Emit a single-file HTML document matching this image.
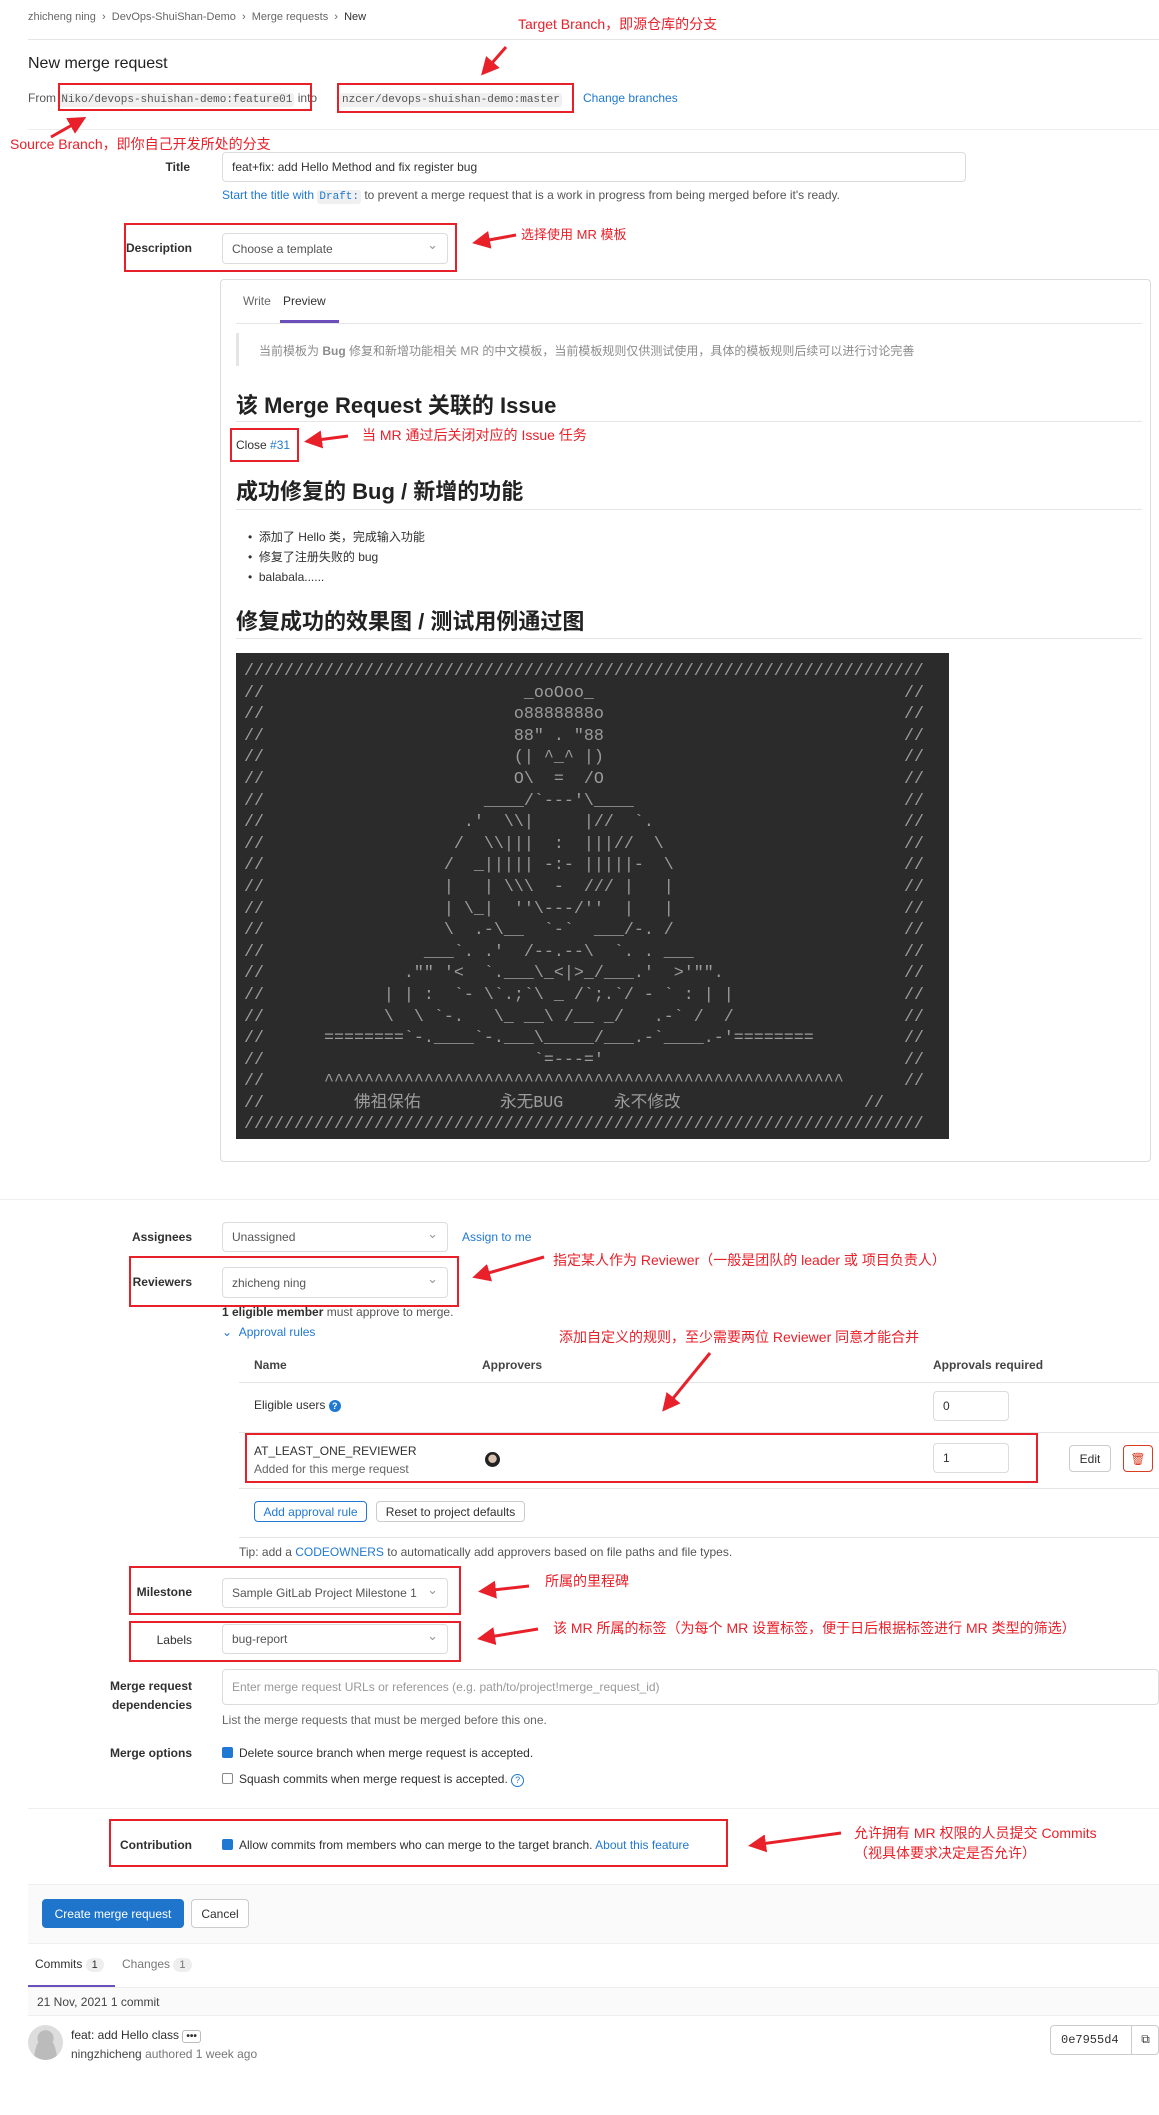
<!DOCTYPE html>
<html><head><meta charset="utf-8">
<style>
*{box-sizing:border-box;margin:0;padding:0}
body{width:1159px;height:2115px;position:relative;background:#fff;font-family:"Liberation Sans","Noto Sans CJK SC",sans-serif;font-size:13px;color:#303030;overflow:hidden}
.a{position:absolute;white-space:nowrap}
.red{color:#e8202a;font-size:14px}
.box{position:absolute;border:2px solid #e8202a}
.hr{position:absolute;height:1px;background:#e5e5e5}
.code{font-family:"Liberation Mono",monospace;background:#f0f0f0;border-radius:3px;padding:1px 2px;font-size:11px}
.sel{position:absolute;border:1px solid #dcdcdc;border-radius:4px;background:#fff;color:#555;font-size:12px;padding-left:9px;display:flex;align-items:center}
.sel:after{content:"⌄";position:absolute;right:9px;top:3px;color:#999;font-size:13px}
.inp{position:absolute;border:1px solid #dcdcdc;border-radius:4px;background:#fff;font-size:12px;padding-left:9px;display:flex;align-items:center}
.lab{position:absolute;text-align:right;width:180px;font-weight:bold;color:#303030;font-size:12px}
.blue{color:#1f78d1}
.cb{display:inline-block;width:11px;height:11px;border-radius:2px;vertical-align:-1px;margin-right:6px}
.art{position:absolute;left:236px;top:653px;width:713px;height:486px;background:#2b2b2b;color:#9c9c9c;font-family:"Liberation Mono","Noto Sans CJK SC",monospace;font-size:16.67px;line-height:21.6px;padding:8px 0 0 8px}
.art div{position:relative;white-space:pre;height:21.6px}
.art div i{position:absolute;left:660px;top:0;font-style:normal}
.h{position:absolute;font-weight:bold;font-size:22px;color:#222}
.btn{position:absolute;border:1px solid #ccc;border-radius:4px;background:#fff;display:flex;align-items:center;justify-content:center;font-size:12px}
</style></head><body>

<div class="a" style="left:28px;top:11px;font-size:11px;color:#666">zhicheng ning &nbsp;›&nbsp; DevOps-ShuiShan-Demo &nbsp;›&nbsp; Merge requests &nbsp;›&nbsp; <span style="color:#303030">New</span></div>
<div class="a red" style="left:518px;top:14px;font-size:14px">Target Branch，即源仓库的分支</div>
<div class="hr" style="left:28px;top:39px;width:1131px"></div>
<div class="a" style="left:28px;top:55px;font-size:16px;color:#222">New merge request</div>
<div class="a" style="left:28px;top:91px;font-size:12px;color:#555">From <span class="code">Niko/devops-shuishan-demo:feature01</span> into</div>
<div class="a" style="left:340px;top:91px;font-size:12px;color:#555"><span class="code">nzcer/devops-shuishan-demo:master</span></div>
<div class="a blue" style="left:583px;top:91px;font-size:12px">Change branches</div>
<div class="box" style="left:58px;top:83px;width:254px;height:28px"></div>
<div class="box" style="left:337px;top:83px;width:237px;height:30px"></div>
<div class="hr" style="left:28px;top:129px;width:1131px;background:#eee"></div>
<div class="a red" style="left:10px;top:134px">Source Branch，即你自己开发所处的分支</div>

<div class="lab" style="left:10px;top:160px">Title</div>
<div class="inp" style="left:222px;top:152px;width:744px;height:30px;color:#333">feat+fix: add Hello Method and fix register bug</div>
<div class="a" style="left:222px;top:188px;font-size:12px;color:#555"><span class="blue">Start the title with</span> <span class="code blue">Draft:</span> to prevent a merge request that is a work in progress from being merged before it's ready.</div>

<div class="box" style="left:124px;top:223px;width:333px;height:49px"></div>
<div class="lab" style="left:12px;top:241px">Description</div>
<div class="sel" style="left:222px;top:233px;width:226px;height:31px">Choose a template</div>
<div class="a red" style="left:521px;top:224px;font-size:13px">选择使用 MR 模板</div>

<div style="position:absolute;left:220px;top:279px;width:931px;height:883px;border:1px solid #dcdcdc;border-radius:4px"></div>
<div class="a" style="left:243px;top:294px;color:#666;font-size:12px">Write</div>
<div class="a" style="left:283px;top:294px;color:#303030;font-size:12px">Preview</div>
<div style="position:absolute;left:280px;top:320px;width:59px;height:3px;background:#6b4fbb"></div>
<div class="hr" style="left:236px;top:323px;width:906px"></div>
<div style="position:absolute;left:236px;top:333px;width:3px;height:33px;background:#e5e5e5"></div>
<div class="a" style="left:259px;top:342px;font-size:12px;color:#8c8c8c">当前模板为 <b>Bug</b> 修复和新增功能相关 MR 的中文模板，当前模板规则仅供测试使用，具体的模板规则后续可以进行讨论完善</div>
<div class="h" style="left:236px;top:388px">该 Merge Request 关联的 Issue</div>
<div class="hr" style="left:236px;top:421px;width:906px"></div>
<div class="a" style="left:236px;top:438px;font-size:12px">Close <span class="blue">#31</span></div>
<div class="box" style="left:230px;top:428px;width:69px;height:34px"></div>
<div class="a red" style="left:362px;top:425px;font-size:14px">当 MR 通过后关闭对应的 Issue 任务</div>
<div class="h" style="left:236px;top:474px">成功修复的 Bug / 新增的功能</div>
<div class="hr" style="left:236px;top:509px;width:906px"></div>
<div class="a" style="left:248px;top:527px;font-size:12px;line-height:20px">•&nbsp; 添加了 Hello 类，完成输入功能<br>•&nbsp; 修复了注册失败的 bug<br>•&nbsp; balabala......</div>
<div class="h" style="left:236px;top:604px">修复成功的效果图 / 测试用例通过图</div>
<div class="hr" style="left:236px;top:638px;width:906px"></div>

<div class="art">
<div>////////////////////////////////////////////////////////////////////</div>
<div>//                          _ooOoo_<i>//</i></div>
<div>//                         o8888888o<i>//</i></div>
<div>//                         88" . "88<i>//</i></div>
<div>//                         (| ^_^ |)<i>//</i></div>
<div>//                         O\  =  /O<i>//</i></div>
<div>//                      ____/`---'\____<i>//</i></div>
<div>//                    .'  \\|     |//  `.<i>//</i></div>
<div>//                   /  \\|||  :  |||//  \<i>//</i></div>
<div>//                  /  _||||| -:- |||||-  \<i>//</i></div>
<div>//                  |   | \\\  -  /// |   |<i>//</i></div>
<div>//                  | \_|  ''\---/''  |   |<i>//</i></div>
<div>//                  \  .-\__  `-`  ___/-. /<i>//</i></div>
<div>//                ___`. .'  /--.--\  `. . ___<i>//</i></div>
<div>//              ."" '&lt;  `.___\_&lt;|&gt;_/___.'  &gt;'"".<i>//</i></div>
<div>//            | | :  `- \`.;`\ _ /`;.`/ - ` : | |<i>//</i></div>
<div>//            \  \ `-.   \_ __\ /__ _/   .-` /  /<i>//</i></div>
<div>//      ========`-.____`-.___\_____/___.-`____.-'========<i>//</i></div>
<div>//                           `=---='<i>//</i></div>
<div>//      ^^^^^^^^^^^^^^^^^^^^^^^^^^^^^^^^^^^^^^^^^^^^^^^^^^^^<i>//</i></div>
<div>//<span style="position:absolute;left:110px">佛祖保佑</span><span style="position:absolute;left:256px">永无BUG</span><span style="position:absolute;left:370px">永不修改</span><i style="left:620px">//</i></div>
<div>////////////////////////////////////////////////////////////////////</div>
</div>

<div class="hr" style="left:0;top:1199px;width:1159px;background:#f0f0f0"></div>

<div class="lab" style="left:12px;top:1230px">Assignees</div>
<div class="sel" style="left:222px;top:1222px;width:226px;height:30px">Unassigned</div>
<div class="a blue" style="left:462px;top:1230px;font-size:12px">Assign to me</div>
<div class="box" style="left:129px;top:1256px;width:330px;height:51px"></div>
<div class="lab" style="left:12px;top:1275px">Reviewers</div>
<div class="sel" style="left:222px;top:1267px;width:226px;height:31px">zhicheng ning</div>
<div class="a red" style="left:553px;top:1250px;font-size:14px">指定某人作为 Reviewer（一般是团队的 leader 或 项目负责人）</div>
<div class="a" style="left:222px;top:1305px;font-size:12px;color:#555"><b style="color:#303030">1 eligible member</b> must approve to merge.</div>
<div class="a blue" style="left:222px;top:1325px;font-size:12px">⌄ &nbsp;Approval rules</div>
<div class="a red" style="left:559px;top:1327px;font-size:14px">添加自定义的规则，至少需要两位 Reviewer 同意才能合并</div>
<div class="a" style="left:254px;top:1358px;font-weight:bold;font-size:12px;color:#444">Name</div>
<div class="a" style="left:482px;top:1358px;font-weight:bold;font-size:12px;color:#444">Approvers</div>
<div class="a" style="left:933px;top:1358px;font-weight:bold;font-size:12px;color:#444">Approvals required</div>
<div class="hr" style="left:239px;top:1382px;width:920px"></div>
<div class="a" style="left:254px;top:1398px;font-size:12px">Eligible users <span style="display:inline-block;width:12px;height:12px;border-radius:6px;background:#1f78d1;color:#fff;font-size:9px;text-align:center;line-height:12px;font-weight:bold">?</span></div>
<div class="inp" style="left:933px;top:1391px;width:76px;height:30px;font-size:12px">0</div>
<div class="hr" style="left:239px;top:1432px;width:920px"></div>
<div class="box" style="left:245px;top:1433px;width:793px;height:50px"></div>
<div class="a" style="left:254px;top:1444px;font-size:12px">AT_LEAST_ONE_REVIEWER</div>
<div class="a" style="left:254px;top:1462px;font-size:12px;color:#666">Added for this merge request</div>
<div style="position:absolute;left:485px;top:1452px;width:15px;height:15px;border-radius:8px;background:radial-gradient(circle at 50% 45%,#d9c3b0 35%,#222 40%)"></div>
<div class="inp" style="left:933px;top:1443px;width:76px;height:30px;font-size:12px">1</div>
<div class="btn" style="left:1069px;top:1445px;width:42px;height:27px">Edit</div>
<div class="btn" style="left:1123px;top:1445px;width:30px;height:27px;border-color:#db3b21;color:#db3b21">🗑</div>
<div class="hr" style="left:239px;top:1488px;width:920px"></div>
<div class="btn" style="left:254px;top:1501px;width:113px;height:21px;border-color:#1f78d1;color:#1f78d1">Add approval rule</div>
<div class="btn" style="left:376px;top:1501px;width:149px;height:21px">Reset to project defaults</div>
<div class="hr" style="left:239px;top:1537px;width:920px"></div>
<div class="a" style="left:239px;top:1545px;font-size:12px;color:#555">Tip: add a <span class="blue">CODEOWNERS</span> to automatically add approvers based on file paths and file types.</div>

<div class="box" style="left:129px;top:1566px;width:332px;height:49px"></div>
<div class="lab" style="left:12px;top:1585px">Milestone</div>
<div class="sel" style="left:222px;top:1578px;width:226px;height:30px">Sample GitLab Project Milestone 1</div>
<div class="a red" style="left:545px;top:1571px;font-size:14px">所属的里程碑</div>
<div class="box" style="left:129px;top:1621px;width:332px;height:41px"></div>
<div class="lab" style="left:12px;top:1633px;font-weight:normal">Labels</div>
<div class="sel" style="left:222px;top:1624px;width:226px;height:30px">bug-report</div>
<div class="a red" style="left:553px;top:1618px;font-size:14px">该 MR 所属的标签（为每个 MR 设置标签，便于日后根据标签进行 MR 类型的筛选）</div>
<div class="lab" style="left:12px;top:1677px;line-height:19px">Merge request<br>dependencies</div>
<div class="inp" style="left:222px;top:1669px;width:937px;height:36px;color:#999;font-size:12px">Enter merge request URLs or references (e.g. path/to/project!merge_request_id)</div>
<div class="a" style="left:222px;top:1713px;font-size:12px;color:#666">List the merge requests that must be merged before this one.</div>
<div class="lab" style="left:12px;top:1746px">Merge options</div>
<div class="a" style="left:222px;top:1746px;font-size:12px"><span class="cb" style="background:#1f78d1"></span>Delete source branch when merge request is accepted.</div>
<div class="a" style="left:222px;top:1772px;font-size:12px"><span class="cb" style="border:1px solid #888"></span>Squash commits when merge request is accepted. <span style="display:inline-block;width:13px;height:13px;border:1.5px solid #1f78d1;border-radius:7px;color:#1f78d1;font-size:9px;text-align:center;line-height:10px">?</span></div>
<div class="hr" style="left:28px;top:1808px;width:1131px;background:#eee"></div>
<div class="box" style="left:109px;top:1819px;width:619px;height:48px"></div>
<div class="lab" style="left:12px;top:1838px">Contribution</div>
<div class="a" style="left:222px;top:1838px;font-size:12px"><span class="cb" style="background:#1f78d1"></span>Allow commits from members who can merge to the target branch. <span class="blue">About this feature</span></div>
<div class="a red" style="left:854px;top:1823px;font-size:14px;line-height:20px">允许拥有 MR 权限的人员提交 Commits<br>（视具体要求决定是否允许）</div>

<div style="position:absolute;left:28px;top:1884px;width:1131px;height:60px;background:#fafafa;border-top:1px solid #eee;border-bottom:1px solid #f0f0f0"></div>
<div class="btn" style="left:42px;top:1899px;width:142px;height:29px;background:#1f75cb;border-color:#1f75cb;color:#fff;font-size:12px">Create merge request</div>
<div class="btn" style="left:191px;top:1899px;width:58px;height:29px;font-size:12px">Cancel</div>
<div class="a" style="left:35px;top:1957px;font-size:12px">Commits <span style="background:#eee;border-radius:8px;padding:1px 6px;font-size:11px">1</span></div>
<div class="a" style="left:122px;top:1957px;font-size:12px;color:#777">Changes <span style="background:#eee;border-radius:8px;padding:1px 6px;font-size:11px">1</span></div>
<div style="position:absolute;left:28px;top:1985px;width:87px;height:2px;background:#6b4fbb"></div>
<div style="position:absolute;left:28px;top:1987px;width:1131px;height:29px;background:#fafafa;border-top:1px solid #eee;border-bottom:1px solid #eee"></div>
<div class="a" style="left:37px;top:1995px;font-size:12px;color:#444">21 Nov, 2021 1 commit</div>
<div style="position:absolute;left:28px;top:2025px;width:35px;height:35px;border-radius:18px;background:radial-gradient(circle at 50% 38%,#bbb 28%,transparent 30%),radial-gradient(ellipse at 50% 100%,#bbb 45%,#ddd 47%)"></div>
<div class="a" style="left:71px;top:2028px;font-size:12px">feat: add Hello class <span style="border:1px solid #bbb;border-radius:3px;padding:0 3px;font-size:10px;font-weight:bold">•••</span></div>
<div class="a" style="left:71px;top:2047px;font-size:12px;color:#777"><span style="color:#444">ningzhicheng</span> authored 1 week ago</div>
<div class="btn" style="left:1050px;top:2025px;width:109px;height:30px;justify-content:flex-start;padding-left:10px;font-family:'Liberation Mono',monospace;font-size:12px">0e7955d4<span style="position:absolute;left:80px;top:0;width:28px;height:28px;border-left:1px solid #ccc;text-align:center;line-height:28px">⧉</span></div>

<svg style="position:absolute;left:0;top:0" width="1159" height="2115">
<defs><marker id="m" markerWidth="6" markerHeight="6" refX="4" refY="3" orient="auto"><path d="M0,0 L6,3 L0,6 z" fill="#e8202a"/></marker></defs>
<g stroke="#e8202a" stroke-width="3" marker-end="url(#m)">
<line x1="506" y1="47" x2="485" y2="71"/>
<line x1="51" y1="137" x2="81" y2="120"/>
<line x1="516" y1="235" x2="478" y2="242"/>
<line x1="348" y1="436" x2="310" y2="441"/>
<line x1="544" y1="1257" x2="478" y2="1276"/>
<line x1="710" y1="1353" x2="666" y2="1407"/>
<line x1="529" y1="1586" x2="484" y2="1591"/>
<line x1="538" y1="1629" x2="483" y2="1638"/>
<line x1="841" y1="1833" x2="754" y2="1845"/>
</g></svg>
</body></html>
